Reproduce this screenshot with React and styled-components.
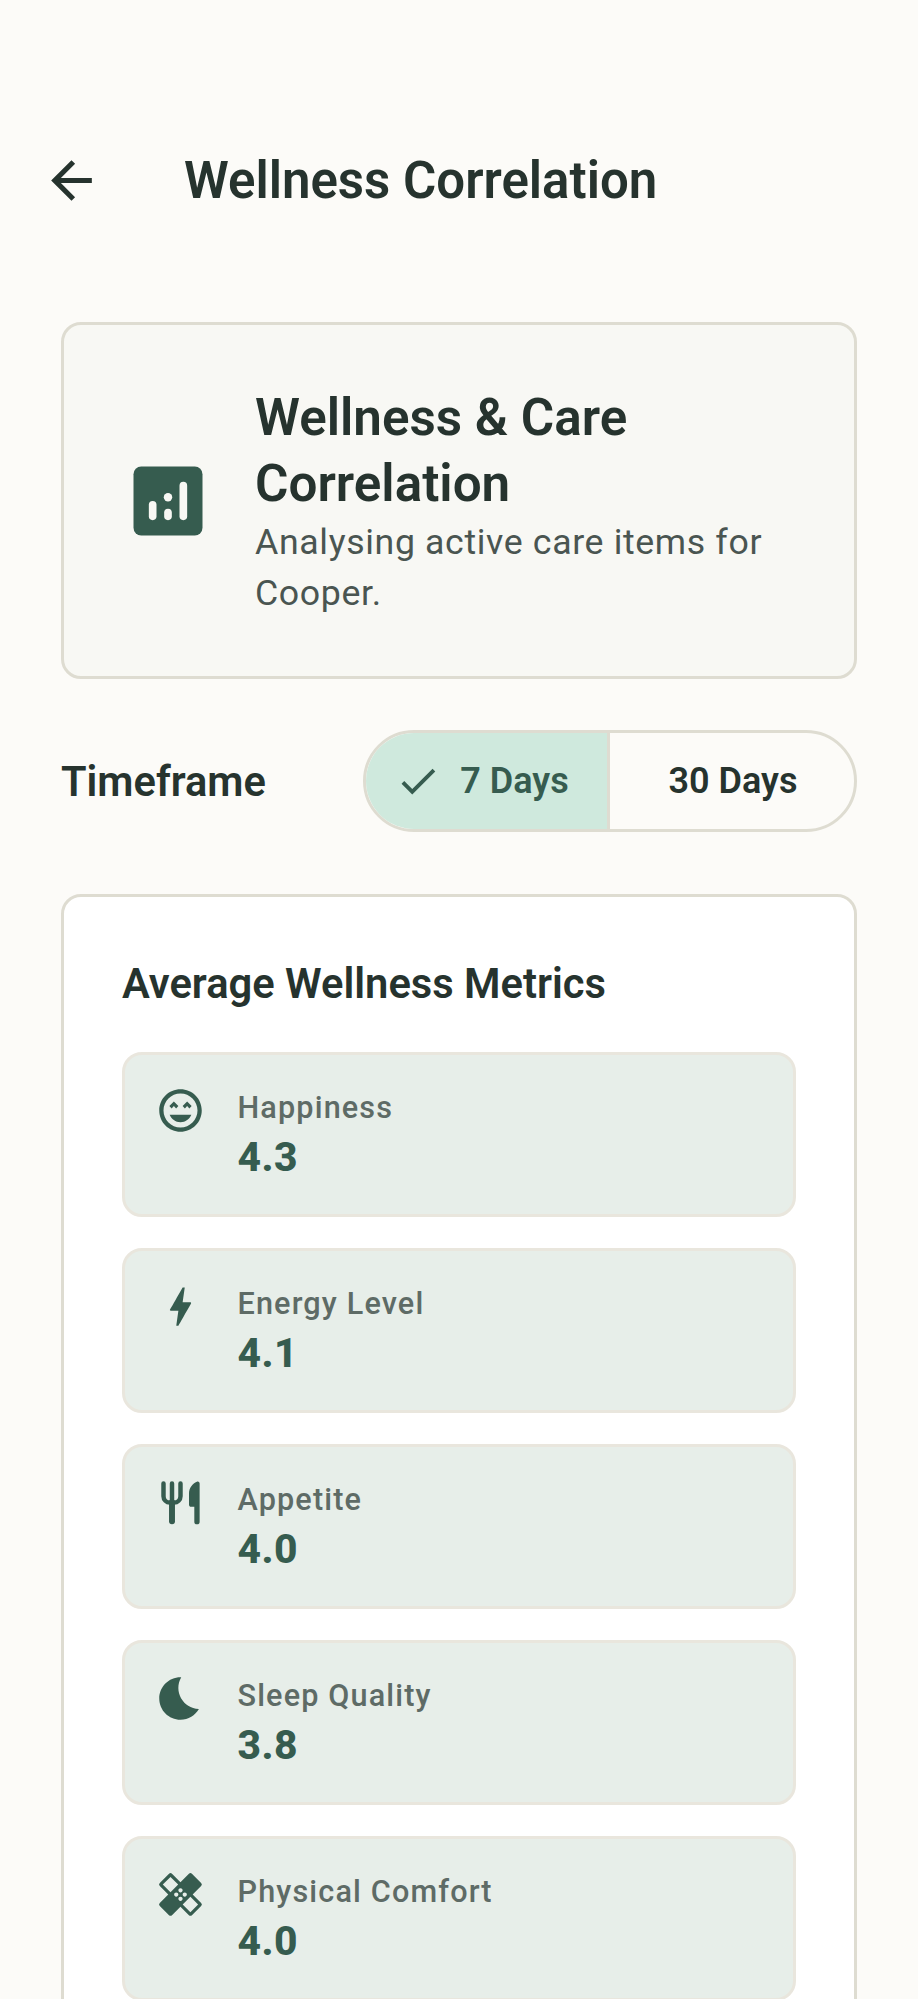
import React from "react";
import styled, { createGlobalStyle } from "styled-components";
import { MdArrowBack, MdCheck, MdOutlineSentimentVerySatisfied, MdBolt, MdBedtime, MdHealing } from "react-icons/md";

const Global = createGlobalStyle`
  html, body { margin: 0; padding: 0; background: #fcfbf8; }
  body { font-family: Roboto, "Noto Sans", sans-serif; color: #26332e; }
`;
const Page = styled.div`
  width: 918px; height: 1999px; overflow: hidden; background: #fcfbf8; box-sizing: border-box;
`;
const Header = styled.header`
  display: flex; align-items: center; height: 112px; margin-top: 124px; padding-left: 41px;
`;
const BackIcon = styled(MdArrowBack)`
  width: 61px; height: 61px; color: #26332e; flex: none;
`;
const Title = styled.h1`
  margin: 2px 0 0 82px; font-size: 51px; font-weight: 600; line-height: 60px; color: #26332e;
`;
const Main = styled.main`
  display: flex; flex-direction: column; padding: 0 61px; margin-top: 86px;
`;
const IntroCard = styled.section`
  display: flex; align-items: center; gap: 41px; height: 357px; box-sizing: border-box;
  padding: 0 40px 0 58px; background: #f8f8f4; border: 3px solid #dedcd1; border-radius: 20px;
`;
const IntroIconBox = styled.div`
  width: 92px; height: 92px; flex: none; color: #365c4f;
  & > svg { width: 100%; height: 100%; display: block; }
`;
const IntroText = styled.div`
  display: flex; flex-direction: column; padding-top: 3px;
`;
const IntroTitle = styled.h2`
  margin: 0; font-size: 51.2px; font-weight: 600; line-height: 66px; color: #26332e;
`;
const IntroSub = styled.p`
  margin: 0; font-size: 35.7px; font-weight: 400; line-height: 51px; letter-spacing: .64px; color: #4a5551;
`;
const TimeRow = styled.div`
  display: flex; align-items: center; justify-content: space-between; margin-top: 51px;
`;
const TimeLabel = styled.span`
  font-size: 41.6px; font-weight: 600; color: #26332e;
`;
const Segments = styled.div`
  display: flex; width: 494px; height: 102px; box-sizing: border-box; overflow: hidden;
  border: 3px solid #dedcd1; border-radius: 51px;
`;
const Segment = styled.div`
  display: flex; align-items: center; justify-content: center; gap: 19px;
  flex: ${(p) => (p.$active ? "0 0 241px" : "1")};
  box-sizing: border-box;
  padding: ${(p) => (p.$active ? "0 9px 0 0" : "0 0 0 2px")};
  font-size: 36px; font-weight: 600;
  background: ${(p) => (p.$active ? "#cfe9dd" : "transparent")};
  color: ${(p) => (p.$active ? "#365c4f" : "#26332e")};
  & + & { border-left: 3px solid #dedcd1; }
`;
const CheckIcon = styled(MdCheck)`
  width: 46px; height: 46px; flex: none;
`;
const MetricsCard = styled.section`
  margin-top: 62px; padding: 62px 58px 0; background: #fff; border: 3px solid #dedcd1;
  border-radius: 20px; min-height: 1200px; box-sizing: border-box;
`;
const MetricsTitle = styled.h3`
  margin: 0 0 43px; font-size: 41.7px; font-weight: 600; line-height: 50px; color: #26332e;
`;
const MetricList = styled.div`
  display: flex; flex-direction: column; gap: 31px;
`;
const Metric = styled.div`
  display: flex; align-items: flex-start; gap: 31.5px; height: 165px; box-sizing: border-box;
  padding: 30px 30px 0; background: #e7eee9; border: 3px solid #e9e6dd; border-radius: 20px;
`;
const IconSlot = styled.div`
  width: 51px; height: 51px; flex: none; color: #365c4f;
  & > svg { width: 100%; height: 100%; display: block; }
`;
const MetricText = styled.div`
  display: flex; flex-direction: column; padding-top: 1px;
`;
const MetricLabel = styled.span`
  font-size: 30.6px; font-weight: 500; line-height: 44px; letter-spacing: 1.15px; color: #5e6b66;
`;
const MetricValue = styled.span`
  font-size: 40.8px; font-weight: 800; line-height: 54px; letter-spacing: .5px; color: #365c4f;
`;

const AnalyticsGlyph = () => (
  <svg viewBox="0 0 24 24" aria-hidden="true">
    <rect x="3" y="3" width="18" height="18" rx="2" fill="currentColor" />
    <g fill="#f8f8f4">
      <rect x="7" y="12" width="2" height="5" rx="1" />
      <circle cx="12" cy="11" r="1.1" />
      <rect x="11" y="14" width="2" height="3" rx="1" />
      <rect x="15" y="7" width="2" height="10" rx="1" />
    </g>
  </svg>
);

const RestaurantGlyph = () => (
  <svg viewBox="0 0 24 24" aria-hidden="true" fill="none" stroke="currentColor" strokeLinecap="round">
    <path d="M4 3v6c0 1.66 1.34 3 3 3h2c1.66 0 3-1.34 3-3V3M8 3v8" strokeWidth="2.1" />
    <path d="M8 12v8.8" strokeWidth="2.8" />
    <path
      d="M21 3.1c0-.7-.7-1.2-1.3-.9C17.7 3 16 5.2 16 7.7V13c0 .6.4 1 1 1h1.5v7a1.25 1.25 0 0 0 2.5 0V3.1z"
      fill="currentColor" stroke="none"
    />
  </svg>
);

const metrics = [
  ["Happiness", "4.3", MdOutlineSentimentVerySatisfied],
  ["Energy Level", "4.1", MdBolt],
  ["Appetite", "4.0", RestaurantGlyph],
  ["Sleep Quality", "3.8", MdBedtime],
  ["Physical Comfort", "4.0", MdHealing],
];

export default function App() {
  return (
    <Page>
      <Global />
      <Header>
        <BackIcon />
        <Title>Wellness Correlation</Title>
      </Header>
      <Main>
        <IntroCard>
          <IntroIconBox><AnalyticsGlyph /></IntroIconBox>
          <IntroText>
            <IntroTitle>Wellness &amp; Care Correlation</IntroTitle>
            <IntroSub>Analysing active care items for Cooper.</IntroSub>
          </IntroText>
        </IntroCard>
        <TimeRow>
          <TimeLabel>Timeframe</TimeLabel>
          <Segments>
            <Segment $active><CheckIcon />7 Days</Segment>
            <Segment>30 Days</Segment>
          </Segments>
        </TimeRow>
        <MetricsCard>
          <MetricsTitle>Average Wellness Metrics</MetricsTitle>
          <MetricList>
            {metrics.map(([label, value, Icon]) => (
              <Metric key={label}>
                <IconSlot><Icon /></IconSlot>
                <MetricText>
                  <MetricLabel>{label}</MetricLabel>
                  <MetricValue>{value}</MetricValue>
                </MetricText>
              </Metric>
            ))}
          </MetricList>
        </MetricsCard>
      </Main>
    </Page>
  );
}
